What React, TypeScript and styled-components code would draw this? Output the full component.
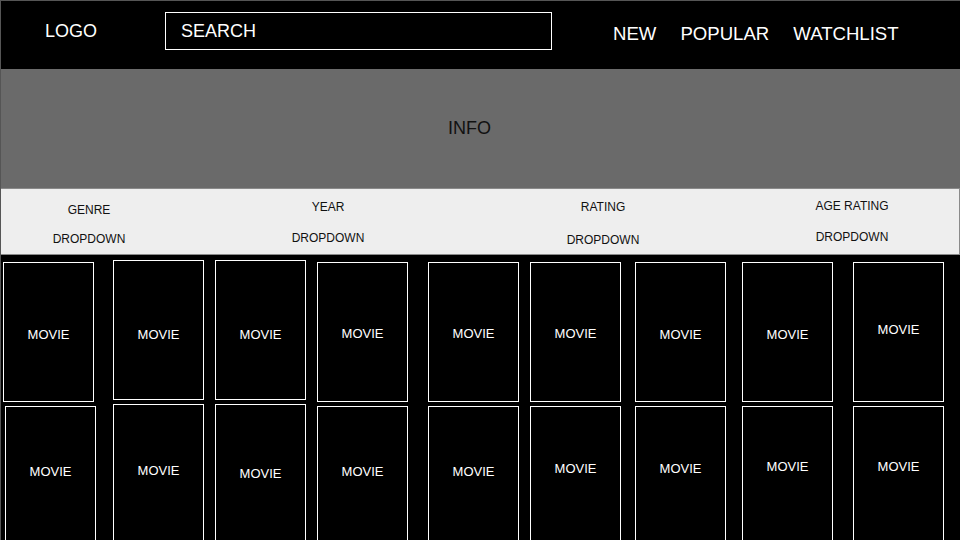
import styled, { createGlobalStyle } from "styled-components";

const GlobalStyle = createGlobalStyle`
  html, body {
    margin: 0;
    padding: 0;
    background: #000;
    font-family: "Liberation Sans", Arial, sans-serif;
  }
  * { box-sizing: border-box; }
`

const filters = [
  { label: 'GENRE', ml: 18, top: 14, gap: 15 },
  { label: 'YEAR', ml: 99, top: 11, gap: 17 },
  { label: 'RATING', ml: 135, top: 11, gap: 19 },
  { label: 'AGE RATING', ml: 109, top: 10, gap: 17 },
]

// hand drawn wireframe, so every column sits a little off
const columns = [
  { ml: 2, cards: [{ dy: 2, ty: 73, dx: 0 }, { dy: 0, ty: 66, dx: 2 }] },
  { ml: 17, cards: [{ dy: 0, ty: 75, dx: 0 }, { dy: 0, ty: 67, dx: 0 }] },
  { ml: 11, cards: [{ dy: 0, ty: 75, dx: 0 }, { dy: 0, ty: 70, dx: 0 }] },
  { ml: 11, cards: [{ dy: 2, ty: 72, dx: 0 }, { dy: 0, ty: 66, dx: 0 }] },
  { ml: 20, cards: [{ dy: 2, ty: 72, dx: 0 }, { dy: 0, ty: 66, dx: 0 }] },
  { ml: 11, cards: [{ dy: 2, ty: 72, dx: 0 }, { dy: 0, ty: 63, dx: 0 }] },
  { ml: 14, cards: [{ dy: 2, ty: 73, dx: 0 }, { dy: 0, ty: 63, dx: 0 }] },
  { ml: 16, cards: [{ dy: 2, ty: 73, dx: 0 }, { dy: 0, ty: 61, dx: 0 }] },
  { ml: 20, cards: [{ dy: 2, ty: 68, dx: 0 }, { dy: 0, ty: 61, dx: 0 }] },
]

export default function App() {
  return (
    <Page>
      <GlobalStyle />
      <Header>
        <Logo>LOGO</Logo>
        <Search>SEARCH</Search>
        <Nav>
          <NavItem>NEW</NavItem>
          <NavItem>POPULAR</NavItem>
          <NavItem>WATCHLIST</NavItem>
        </Nav>
      </Header>
      <Info>INFO</Info>
      <FilterBar>
        {filters.map(f => (
          <FilterGroup key={f.label} ml={f.ml} top={f.top} gap={f.gap}>
            <FilterLabel>{f.label}</FilterLabel>
            <FilterLabel>DROPDOWN</FilterLabel>
          </FilterGroup>
        ))}
      </FilterBar>
      <MovieGrid>
        {columns.map((col, i) => (
          <MovieColumn key={i} ml={col.ml}>
            {col.cards.map((c, j) => (
              <MovieCard key={j} dy={c.dy} dx={c.dx} ty={c.ty}>MOVIE</MovieCard>
            ))}
          </MovieColumn>
        ))}
      </MovieGrid>
    </Page>
  )
}

const Page = styled.div`
  width: 960px;
  height: 540px;
  overflow: hidden;
  border-left: 1px solid #555;
  background: #000;
`

const Header = styled.header`
  height: 69px;
  display: flex;
  align-items: flex-start;
  padding: 11px 0 0 44px;
  border-top: 1px solid #555;
  background: #000;
  color: #fff;
  font-size: 18px;
`

const Logo = styled.div`
  width: 53px;
  line-height: 38px;
  margin-right: 67px;
`

const Search = styled.div`
  width: 387px;
  height: 38px;
  border: 1px solid #fff;
  padding-left: 15px;
  line-height: 36px;
`

const Nav = styled.nav`
  display: flex;
  gap: 24px;
  margin-left: 61px;
  margin-top: 3px;
  font-size: 18.6px;
`

const NavItem = styled.span`
  line-height: 38px;
`

const Info = styled.section`
  height: 119px;
  background: #6a6a6a;
  color: #111;
  font-size: 18px;
  display: flex;
  align-items: center;
  justify-content: center;
  padding-right: 22px;
`

const FilterBar = styled.section`
  height: 67px;
  display: flex;
  background: #eeeeee;
  border: 1px solid #8a8a8a;
  border-left: none;
`

const FilterGroup = styled.div<{ ml: number; top: number; gap: number }>`
  width: 140px;
  margin-left: ${p => p.ml}px;
  padding-top: ${p => p.top}px;
  display: flex;
  flex-direction: column;
  align-items: center;
  gap: ${p => p.gap}px;
`

const FilterLabel = styled.span`
  font-size: 12px;
  line-height: 14px;
  color: #111;
`

const MovieGrid = styled.main`
  display: flex;
  align-items: flex-start;
  padding-top: 5px;
`

const MovieColumn = styled.div<{ ml: number }>`
  display: flex;
  flex-direction: column;
  margin-left: ${p => p.ml}px;
`

const MovieCard = styled.div<{ dy: number; dx: number; ty: number }>`
  width: 91px;
  height: 140px;
  margin-top: ${p => p.dy}px;
  margin-left: ${p => p.dx}px;
  margin-bottom: 4px;
  border: 1px solid #fff;
  background: #000;
  color: #fff;
  font-size: 13px;
  line-height: 16px;
  text-align: center;
  padding-top: ${p => p.ty - 9}px;
`
